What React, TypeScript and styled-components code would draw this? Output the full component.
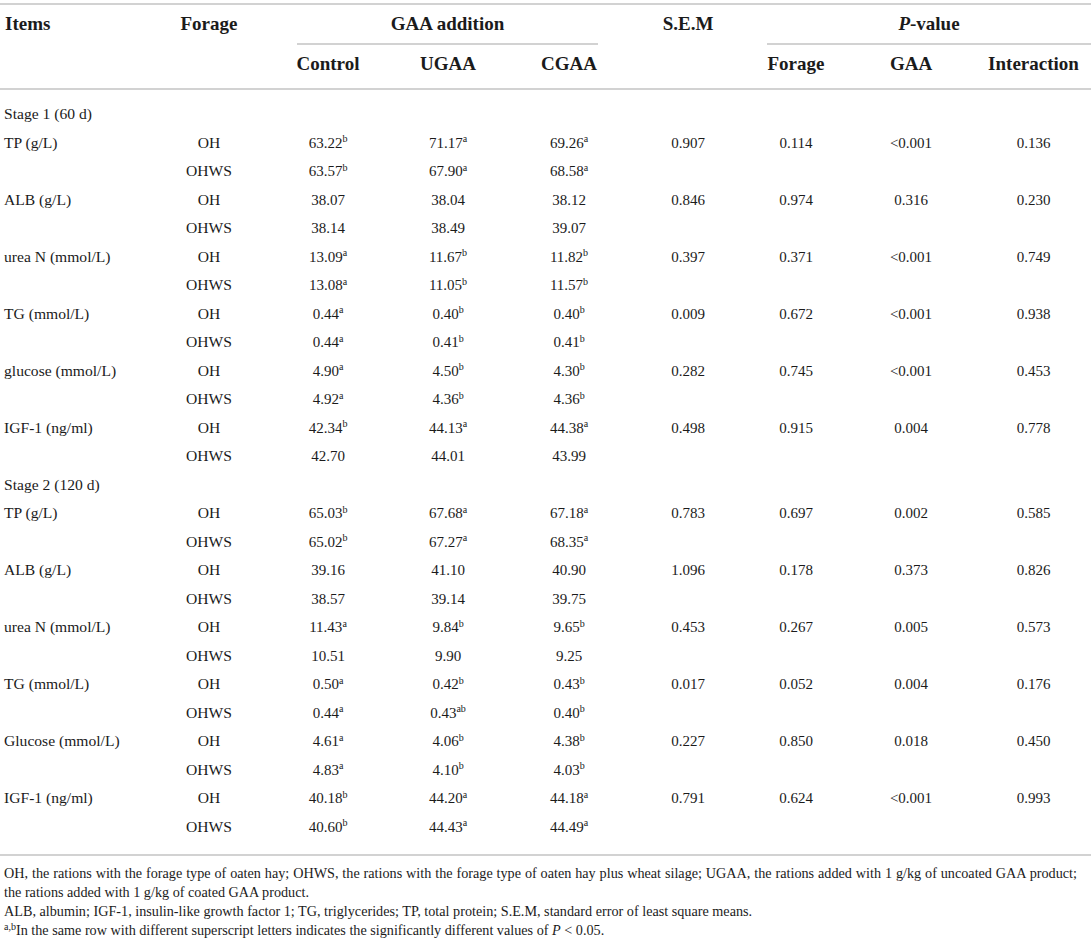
import React from "react";
import styled, { createGlobalStyle } from "styled-components";

const GlobalStyle = createGlobalStyle`
  html, body { margin: 0; padding: 0; background: #ffffff; }
  body { font-family: "Liberation Serif", "Times New Roman", serif; color: #1b1b1b; }
`;

const LINE = "#d2d2d2";

const Page = styled.div`
  width: 1091px;
  padding-top: 3px;
`;

const Table = styled.table`
  width: 1091px;
  table-layout: fixed;
  border-collapse: collapse;
  border-top: 2px solid ${LINE};
  border-bottom: 2px solid ${LINE};
`;

const Col = styled.col<{ $w: number }>`
  width: ${(p) => p.$w}px;
`;

const HeadRow = styled.tr<{ $last?: boolean }>`
  border-bottom: ${(p) => (p.$last ? `2px solid ${LINE}` : "none")};
`;

const Th = styled.th<{ $left?: boolean; $second?: boolean }>`
  font-size: 19px;
  font-weight: 700;
  line-height: 20px;
  text-align: ${(p) => (p.$left ? "left" : "center")};
  vertical-align: top;
  padding: ${(p) => (p.$second ? "9px 0 14px" : "9px 0 0")};
  padding-left: ${(p) => (p.$left ? "5px" : "0")};
  white-space: nowrap;
`;

const GroupLabel = styled.div<{ $l: number; $r: number }>`
  margin: 0 ${(p) => p.$r}px 0 ${(p) => p.$l}px;
  padding-bottom: 9px;
  border-bottom: 2px solid ${LINE};
`;

const Italic = styled.i`
  font-style: italic;
`;

const Row = styled.tr`
  height: 28.5px;
`;

const Gap = styled.tr<{ $h: number }>`
  height: ${(p) => p.$h}px;
`;

const Td = styled.td<{ $left?: boolean; $text?: boolean }>`
  font-size: ${(p) => (p.$text ? "15.6px" : "15px")};
  line-height: 20px;
  padding: 0 0 0 ${(p) => (p.$left ? "4px" : "0")};
  text-align: ${(p) => (p.$left ? "left" : "center")};
  vertical-align: middle;
  white-space: nowrap;
`;

const Sup = styled.sup`
  font-size: 10px;
  line-height: 0;
  vertical-align: baseline;
  position: relative;
  top: -0.55em;
`;

const Notes = styled.div`
  padding: 8px 14px 0 4px;
  font-size: 14.2px;
  line-height: 19px;
`;

const Note = styled.p`
  margin: 0;
  text-align: justify;
`;

type Item = {
  name: string;
  oh: string[];
  ohws: string[];
  sem: string;
  p: string[];
};

type Stage = { title: string; items: Item[] };

const stages: Stage[] = [
  {
    title: "Stage 1 (60 d)",
    items: [
      { name: "TP (g/L)", oh: ["63.22^b", "71.17^a", "69.26^a"], ohws: ["63.57^b", "67.90^a", "68.58^a"], sem: "0.907", p: ["0.114", "<0.001", "0.136"] },
      { name: "ALB (g/L)", oh: ["38.07", "38.04", "38.12"], ohws: ["38.14", "38.49", "39.07"], sem: "0.846", p: ["0.974", "0.316", "0.230"] },
      { name: "urea N (mmol/L)", oh: ["13.09^a", "11.67^b", "11.82^b"], ohws: ["13.08^a", "11.05^b", "11.57^b"], sem: "0.397", p: ["0.371", "<0.001", "0.749"] },
      { name: "TG (mmol/L)", oh: ["0.44^a", "0.40^b", "0.40^b"], ohws: ["0.44^a", "0.41^b", "0.41^b"], sem: "0.009", p: ["0.672", "<0.001", "0.938"] },
      { name: "glucose (mmol/L)", oh: ["4.90^a", "4.50^b", "4.30^b"], ohws: ["4.92^a", "4.36^b", "4.36^b"], sem: "0.282", p: ["0.745", "<0.001", "0.453"] },
      { name: "IGF-1 (ng/ml)", oh: ["42.34^b", "44.13^a", "44.38^a"], ohws: ["42.70", "44.01", "43.99"], sem: "0.498", p: ["0.915", "0.004", "0.778"] },
    ],
  },
  {
    title: "Stage 2 (120 d)",
    items: [
      { name: "TP (g/L)", oh: ["65.03^b", "67.68^a", "67.18^a"], ohws: ["65.02^b", "67.27^a", "68.35^a"], sem: "0.783", p: ["0.697", "0.002", "0.585"] },
      { name: "ALB (g/L)", oh: ["39.16", "41.10", "40.90"], ohws: ["38.57", "39.14", "39.75"], sem: "1.096", p: ["0.178", "0.373", "0.826"] },
      { name: "urea N (mmol/L)", oh: ["11.43^a", "9.84^b", "9.65^b"], ohws: ["10.51", "9.90", "9.25"], sem: "0.453", p: ["0.267", "0.005", "0.573"] },
      { name: "TG (mmol/L)", oh: ["0.50^a", "0.42^b", "0.43^b"], ohws: ["0.44^a", "0.43^ab", "0.40^b"], sem: "0.017", p: ["0.052", "0.004", "0.176"] },
      { name: "Glucose (mmol/L)", oh: ["4.61^a", "4.06^b", "4.38^b"], ohws: ["4.83^a", "4.10^b", "4.03^b"], sem: "0.227", p: ["0.850", "0.018", "0.450"] },
      { name: "IGF-1 (ng/ml)", oh: ["40.18^b", "44.20^a", "44.18^a"], ohws: ["40.60^b", "44.43^a", "44.49^a"], sem: "0.791", p: ["0.624", "<0.001", "0.993"] },
    ],
  },
];

const widths = [150, 118, 120, 120, 122, 116, 100, 130, 115];

const Value: React.FC<{ v: string }> = ({ v }) => {
  const [num, sup] = v.split("^");
  return (
    <>
      {num}
      {sup ? <Sup>{sup}</Sup> : null}
    </>
  );
};

const Empty: React.FC<{ n: number }> = ({ n }) => (
  <>
    {Array.from({ length: n }).map((_, i) => (
      <Td key={i} />
    ))}
  </>
);

export default function App() {
  return (
    <>
      <GlobalStyle />
      <Page>
        <Table>
          <colgroup>
            {widths.map((w, i) => (
              <Col key={i} $w={w} />
            ))}
          </colgroup>
          <thead>
            <HeadRow>
              <Th $left>Items</Th>
              <Th>Forage</Th>
              <Th colSpan={3}>
                <GroupLabel $l={29} $r={32}>GAA addition</GroupLabel>
              </Th>
              <Th>S.E.M</Th>
              <Th colSpan={3}>
                <GroupLabel $l={21} $r={0}>
                  <Italic>P</Italic>-value
                </GroupLabel>
              </Th>
            </HeadRow>
            <HeadRow $last>
              <Th $second />
              <Th $second />
              <Th $second>Control</Th>
              <Th $second>UGAA</Th>
              <Th $second>CGAA</Th>
              <Th $second />
              <Th $second>Forage</Th>
              <Th $second>GAA</Th>
              <Th $second>Interaction</Th>
            </HeadRow>
          </thead>
          <tbody>
            <Gap $h={11} />
            {stages.map((s) => (
              <React.Fragment key={s.title}>
                <Row>
                  <Td $left $text>{s.title}</Td>
                  <Empty n={8} />
                </Row>
                {s.items.map((it) => (
                  <React.Fragment key={s.title + it.name}>
                    <Row>
                      <Td $left $text>{it.name}</Td>
                      <Td $text>OH</Td>
                      {it.oh.map((v, i) => (
                        <Td key={i}>
                          <Value v={v} />
                        </Td>
                      ))}
                      <Td>{it.sem}</Td>
                      {it.p.map((v, i) => (
                        <Td key={i}>{v}</Td>
                      ))}
                    </Row>
                    <Row>
                      <Td $left />
                      <Td $text>OHWS</Td>
                      {it.ohws.map((v, i) => (
                        <Td key={i}>
                          <Value v={v} />
                        </Td>
                      ))}
                      <Empty n={4} />
                    </Row>
                  </React.Fragment>
                ))}
              </React.Fragment>
            ))}
            <Gap $h={14} />
          </tbody>
        </Table>
        <Notes>
          <Note>
            OH, the rations with the forage type of oaten hay; OHWS, the rations with the forage type of oaten hay plus
            wheat silage; UGAA, the rations added with 1 g/kg of uncoated GAA product; the rations added with 1 g/kg of
            coated GAA product.
          </Note>
          <Note>
            ALB, albumin; IGF-1, insulin-like growth factor 1; TG, triglycerides; TP, total protein; S.E.M, standard error
            of least square means.
          </Note>
          <Note>
            <Sup>a,b</Sup>In the same row with different superscript letters indicates the significantly different values
            of <Italic>P</Italic> &lt; 0.05.
          </Note>
        </Notes>
      </Page>
    </>
  );
}
